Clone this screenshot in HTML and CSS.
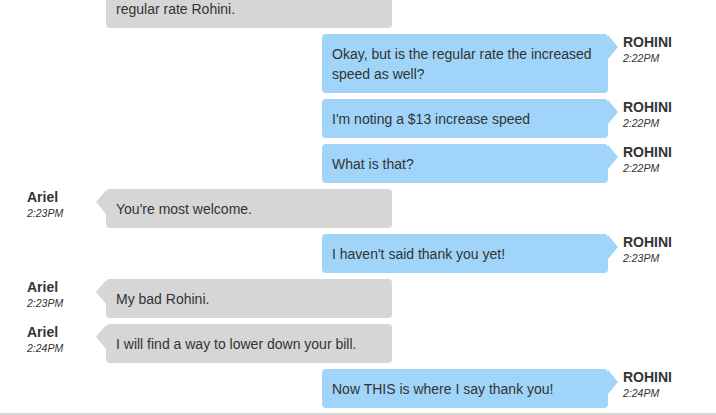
FILE: index.html
```html
<!DOCTYPE html>
<html lang="en">
<head>
    <meta charset="UTF-8">
    <meta name="viewport" content="width=device-width, initial-scale=1.0">
    <title>Chat Transcript</title>
    <link rel="stylesheet" href="styles.css">
</head>
<body>
    <div class="chat">
        <div class="messages">
            <div class="row agent">
                <div class="meta"><span class="name">Ariel</span><span class="time">2:21PM</span></div>
                <div class="bubble">The increased speed is included in the regular rate Rohini.</div>
            </div>

            <div class="row customer">
                <div class="bubble">Okay, but is the regular rate the increased speed as well?</div>
                <div class="meta"><span class="name">ROHINI</span><span class="time">2:22PM</span></div>
            </div>

            <div class="row customer">
                <div class="bubble">I'm noting a $13 increase speed</div>
                <div class="meta"><span class="name">ROHINI</span><span class="time">2:22PM</span></div>
            </div>

            <div class="row customer">
                <div class="bubble">What is that?</div>
                <div class="meta"><span class="name">ROHINI</span><span class="time">2:22PM</span></div>
            </div>

            <div class="row agent">
                <div class="meta"><span class="name">Ariel</span><span class="time">2:23PM</span></div>
                <div class="bubble">You're most welcome.</div>
            </div>

            <div class="row customer">
                <div class="bubble">I haven't said thank you yet!</div>
                <div class="meta"><span class="name">ROHINI</span><span class="time">2:23PM</span></div>
            </div>

            <div class="row agent">
                <div class="meta"><span class="name">Ariel</span><span class="time">2:23PM</span></div>
                <div class="bubble">My bad Rohini.</div>
            </div>

            <div class="row agent">
                <div class="meta"><span class="name">Ariel</span><span class="time">2:24PM</span></div>
                <div class="bubble">I will find a way to lower down your bill.</div>
            </div>

            <div class="row customer">
                <div class="bubble">Now THIS is where I say thank you!</div>
                <div class="meta"><span class="name">ROHINI</span><span class="time">2:24PM</span></div>
            </div>
        </div>
    </div>
</body>
</html>
```

FILE: styles.css
```css
body {
    font-family: "Liberation Sans", Arial, sans-serif;
    margin: 0;
    padding: 0;
    background-color: #fff;
    color: #333;
}

.chat {
    height: 413px;
    overflow: hidden;
    border-bottom: 2px solid #d4d4d4;
}

.messages {
    margin-top: -31px;
}

.row {
    display: flex;
    align-items: flex-start;
    margin-bottom: 6px;
}

.row.agent {
    padding-left: 27px;
}

.row.customer {
    justify-content: flex-end;
}

.meta {
    display: flex;
    flex-direction: column;
}

.agent .meta {
    width: 79px;
}

.customer .meta {
    width: 93px;
    margin-left: 15px;
}

.name {
    font-weight: bold;
    font-size: 14px;
    line-height: 17px;
}

.time {
    font-style: italic;
    font-size: 10.5px;
    line-height: 14px;
}

.bubble {
    position: relative;
    box-sizing: border-box;
    width: 286px;
    padding: 10px 10px 9px;
    font-size: 14px;
    line-height: 20px;
    border-radius: 4px;
}

.agent .bubble {
    background-color: #d6d6d6;
}

.customer .bubble {
    background-color: #a0d5f9;
}

.bubble::before {
    content: "";
    position: absolute;
    top: 1px;
    border-top: 12px solid transparent;
    border-bottom: 12px solid transparent;
}

.agent .bubble::before {
    left: -10px;
    border-right: 10px solid #d6d6d6;
}

.customer .bubble::before {
    right: -10px;
    border-left: 10px solid #a0d5f9;
}
```
